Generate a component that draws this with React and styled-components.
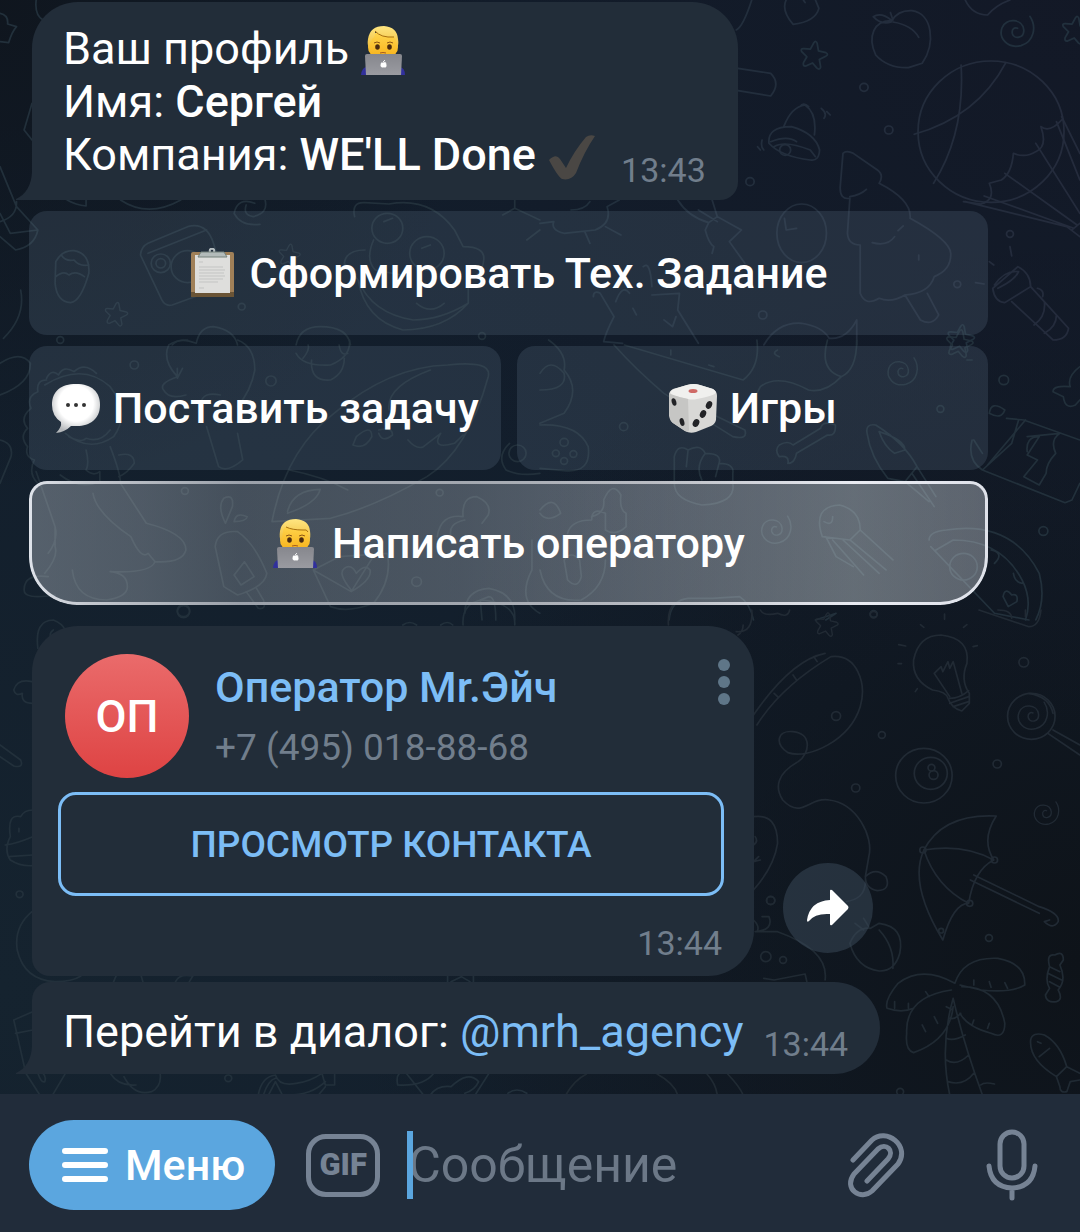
import React from "react";
import styled, { createGlobalStyle } from "styled-components";

const color = {
  bubble: "#222d39",
  composer: "#212c3a",
  accent: "#7cbdf6",
  menu: "#5ba6df",
  muted: "#717e8c",
  icon: "#768394",
};

const GlobalStyle = createGlobalStyle`
  *, *::before, *::after { box-sizing: border-box; }
  body { margin: 0; background: #111a25; }
  button, input { font: inherit; color: inherit; margin: 0; padding: 0; border: 0; background: none; }
  button { cursor: pointer; }
`;

const Screen = styled.div`
  position: relative;
  display: flex;
  flex-direction: column;
  min-height: 100vh;
  overflow: hidden;
  color: #fff;
  font-family: Roboto, "Noto Sans", sans-serif;
  font-size: 45px;
  line-height: 53px;
  background:
    radial-gradient(circle at 100% 0%, rgba(19, 24, 38, 0.9), transparent 45%),
    radial-gradient(circle at 100% 78%, rgba(14, 19, 25, 1), transparent 50%),
    radial-gradient(circle at 0% 0%, rgba(15, 21, 29, 0.9), transparent 30%),
    radial-gradient(circle at 0% 80%, #15232f, transparent 60%),
    #121d2b;
`;

const WallpaperSvg = styled.svg`
  position: absolute;
  inset: 0;
  width: 100%;
  height: 100%;
  fill: none;
  stroke-linecap: round;
  stroke-linejoin: round;
`;

const Chat = styled.main`
  position: relative;
  flex: 1;
  display: flex;
  flex-direction: column;
  justify-content: flex-end;
  align-items: flex-start;
  padding: 2px 92px 20px 32px;
`;

const Bubble = styled.article`
  position: relative;
  display: flex;
  align-items: flex-end;
  gap: ${(p) => (p.$last ? "20px" : "24px")};
  padding: ${(p) => (p.$last ? "23px 32px 16px 31px" : "20px 32px 19px 31px")};
  background: ${color.bubble};
  border-radius: ${(p) => (p.$last ? "18px 46px 46px 0" : "46px 46px 18px 0")};
`;

const TailSvg = styled.svg`
  position: absolute;
  left: -16px;
  bottom: 0;
  width: 16px;
  height: 28px;
  fill: ${color.bubble};
`;

const Message = styled.p`
  margin: 0;
  strong { font-weight: 500; }
`;

const Time = styled.time`
  color: ${color.muted};
  font-size: 34px;
  line-height: 40px;
`;

const BubbleTime = styled(Time)`
  margin-bottom: ${(p) => (p.$last ? "-6px" : "-9px")};
`;

const Link = styled.a`
  color: ${color.accent};
  text-decoration: none;
`;

const Keyboard = styled.div`
  align-self: stretch;
  display: grid;
  grid-template-columns: 1fr 1fr;
  gap: 11px 16px;
  margin: 11px 0 21px -3px;
`;

const KeyButton = styled.button`
  position: relative;
  grid-column: ${(p) => (p.$wide ? "1 / -1" : "auto")};
  display: flex;
  align-items: center;
  justify-content: center;
  gap: ${(p) => (p.$wide ? "14px" : "12px")};
  height: 124px;
  border-radius: 18px;
  background: rgba(90, 110, 130, 0.25);
  font-size: 43px;
  font-weight: 500;
  white-space: nowrap;
`;

const GlowButton = styled(KeyButton)`
  border-radius: 18px 18px 48px 48px;
  background: linear-gradient(
    90deg,
    rgba(225, 232, 240, 0.32) 0%,
    rgba(225, 232, 240, 0.29) 12%,
    rgba(225, 232, 240, 0.24) 22%,
    rgba(225, 232, 240, 0.27) 45%,
    rgba(225, 232, 240, 0.34) 65%,
    rgba(225, 235, 240, 0.4) 86%,
    rgba(225, 232, 240, 0.36) 100%
  );
  &::before {
    content: "";
    position: absolute;
    inset: 0;
    padding: 3px;
    border-radius: inherit;
    background: linear-gradient(90deg, #dfe3ea 0%, #c4c8cf 6%, #9ba1aa 22%, #a2a7af 45%, #b9bcc3 65%, #e9ebf2 86%, #dfe2ea 100%);
    mask: linear-gradient(#000 0 0) content-box exclude, linear-gradient(#000 0 0);
  }
`;

const CardRow = styled.div`
  align-self: stretch;
  display: flex;
  align-items: flex-end;
  gap: 29px;
  margin-bottom: 6px;
`;

const Card = styled.article`
  flex: 0 1 722px;
  display: flex;
  flex-direction: column;
  gap: 14px;
  padding: 28px 30px 12px 26px;
  background: ${color.bubble};
  border-radius: 46px 46px 46px 18px;
`;

const CardHead = styled.header`
  display: flex;
  align-items: flex-start;
  gap: 26px;
  padding-left: 7px;
`;

const Avatar = styled.div`
  flex: none;
  display: grid;
  place-items: center;
  width: 124px;
  height: 124px;
  border-radius: 50%;
  background: linear-gradient(#ea6b6b, #de4343);
  font-size: 45px;
  font-weight: 500;
`;

const Person = styled.div`
  flex: 1;
  padding-top: 8px;
`;

const Name = styled.h2`
  margin: 0 0 11px;
  color: ${color.accent};
  font-size: 43px;
  font-weight: 500;
  line-height: 50px;
`;

const Phone = styled.p`
  margin: 0;
  color: ${color.muted};
  font-size: 37px;
  line-height: 50px;
`;

const MoreButton = styled.button`
  display: flex;
  flex-direction: column;
  gap: 5px;
  margin: 5px -6px 0 0;
`;

const MoreDot = styled.span`
  width: 12px;
  height: 12px;
  border-radius: 50%;
  background: #5f7688;
`;

const ViewButton = styled.button`
  height: 104px;
  border: 3px solid ${color.accent};
  border-radius: 18px;
  color: ${color.accent};
  font-size: 37px;
  font-weight: 500;
`;

const CardTime = styled(Time)`
  align-self: flex-end;
  margin: 13px 2px 1px 0;
`;

const ShareButton = styled.button`
  flex: none;
  display: grid;
  place-items: center;
  width: 90px;
  height: 90px;
  margin-bottom: 23px;
  border-radius: 50%;
  background: rgba(60, 76, 92, 0.5);
`;

const Composer = styled.form`
  position: relative;
  display: flex;
  align-items: center;
  height: 138px;
  padding: 4px 42px 0 29px;
  background: ${color.composer};
  color: ${color.icon};
`;

const MenuButton = styled.button`
  display: flex;
  align-items: center;
  gap: 17px;
  height: 90px;
  padding: 0 30px 0 33px;
  border-radius: 45px;
  background: ${color.menu};
  color: #fff;
  font-size: 43px;
  font-weight: 500;
`;

const GifButton = styled.button`
  width: 74px;
  height: 63px;
  margin: 0 27px 0 31px;
  border: 5px solid ${color.icon};
  border-radius: 20px;
  font-size: 31px;
  font-weight: 900;
  line-height: 40px;
`;

const Field = styled.label`
  position: relative;
  flex: 1;
  min-width: 0;
`;

const Caret = styled.span`
  position: absolute;
  left: 0;
  top: 0;
  width: 6px;
  height: 68px;
  background: ${color.menu};
`;

const Input = styled.input`
  display: block;
  width: 100%;
  height: 68px;
  padding-left: 1px;
  font-size: 50px;
  outline: none;
  &::placeholder { color: #6c7887; opacity: 1; }
`;

const Tools = styled.div`
  display: flex;
  align-items: center;
  gap: 80px;
  button { display: flex; }
`;

const Emoji = styled.svg`
  flex: none;
  width: ${(p) => p.$w || 50}px;
  height: 50px;
  vertical-align: -11px;
`;

function Technologist({ tilt }) {
  return (
    <Emoji $w={46} viewBox="0 0 46 50" aria-hidden="true">
      <defs>
        <linearGradient id="face" x1="0" y1="0" x2="0" y2="1">
          <stop offset="0" stopColor="#ffd64f" />
          <stop offset="1" stopColor="#f7b31c" />
        </linearGradient>
        <linearGradient id="hair" x1="0" y1="0" x2="0" y2="1">
          <stop offset="0" stopColor="#ffe681" />
          <stop offset="1" stopColor="#f0be3c" />
        </linearGradient>
        <linearGradient id="lid" x1="0" y1="0" x2="0" y2="1">
          <stop offset="0" stopColor="#86878d" />
          <stop offset="1" stopColor="#9a9ba1" />
        </linearGradient>
      </defs>
      <path d="M1 50Q2 42 7 42H40Q45 43 45 50Z" fill="#31309c" />
      <path d="M9 15Q9 7 23 7Q37 7 37 15L38 22Q38 26 36 28L34 32H12L10 28Q8 26 8 22Z" fill="url(#face)" />
      <path
        d={tilt
          ? "M9 23Q7 20 8 14Q10 1 24 1Q37 2 38 14Q39 20 37 23Q37 15 34 12Q21 13 15 6Q16 11 12 14Q10 17 9 23Z"
          : "M9 23Q7 20 8 13Q10 1 24 1Q37 2 38 13Q39 20 37 23L36 14Q35 11 31 12Q20 12 14 9Q11 10 11 14Z"}
        fill="url(#hair)"
      />
      <path d={tilt ? "M15 6Q21 13 34 12" : "M14 9Q20 12 31 12Q35 11 36 14"} stroke="#a8700f" fill="none" />
      <path d="M14 18Q17 16 20 18M27 18Q30 16 33 18" stroke="#8b5514" fill="none" />
      <ellipse cx="17.500" cy="22" rx="2.300" ry="2.700" fill="#4a2b10" />
      <ellipse cx="29.500" cy="22" rx="2.300" ry="2.700" fill="#4a2b10" />
      <path d="M20 28Q23 27 26 28" stroke="#a4591c" fill="none" />
      <path d="M5 31Q5 29 7 29H40Q42 29 42 31L41 50H6Z" fill="url(#lid)" />
      <path d="M23 38Q26 36 26 39Q27 43 24 42Q20 43 21 39Q21 37 23 38ZM23 37L25 35Z" fill="#fff" stroke="#fff" strokeWidth=".6" />
    </Emoji>
  );
}

function Clipboard() {
  return (
    <Emoji $w={46} viewBox="0 0 46 50" aria-hidden="true">
      <rect x="2" y="4" width="43" height="45" rx="2" fill="#a08058" />
      <path d="M2 44H45V49H2Z" fill="#6a5436" />
      <path d="M6 7H41V45H6Z" fill="#dededc" />
      <path d="M10 19H34M10 22H36M10 25H35M10 28H36M10 31H34M10 34H29M10 14H14M10 40H15" stroke="#c3c4c3" fill="none" />
      <circle cx="23" cy="3" r="2.300" fill="none" stroke="#b5bdc0" strokeWidth="2" />
      <path d="M12 4H35L38 9H9Z" fill="#b3bbba" stroke="#74817c" />
    </Emoji>
  );
}

function Speech() {
  return (
    <Emoji viewBox="0 0 50 50" aria-hidden="true">
      <defs>
        <radialGradient id="speech" cx="50%" cy="40%" r="60%">
          <stop offset=".6" stopColor="#fff" />
          <stop offset="1" stopColor="#b4b7ba" />
        </radialGradient>
      </defs>
      <path d="M25 1C41 1 49 9 49 22C49 36 39 43 26 43H20Q14 49 5 50Q11 44 10 39Q1 33 1 22C1 8 10 1 25 1Z" fill="url(#speech)" />
      <circle cx="17" cy="22" r="2" fill="#333" />
      <circle cx="25" cy="22" r="2" fill="#333" />
      <circle cx="33" cy="22" r="2" fill="#333" />
    </Emoji>
  );
}

function Dice() {
  return (
    <Emoji viewBox="0 0 50 50" aria-hidden="true">
      <path d="M1 12Q1 8 5 6L19 2Q26 0 32 2L45 6Q49 8 49 13L48 37Q47 41 43 43L28 49Q22 51 17 48L5 40Q2 38 2 33Z" fill="#d8d8d6" />
      <path d="M2 10Q3 7 6 6L19 2Q26 0 32 2L45 6Q48 8 48 10Q45 13 29 16Q24 17 20 16Q4 13 2 10Z" fill="#f0f0ee" />
      <path d="M20 16Q3 12 1 10V33Q2 38 5 40L17 48Q21 50 21 47Z" fill="#c6c6c4" />
      <ellipse cx="25" cy="8" rx="4.500" ry="2" fill="#cf6a66" />
      <g fill="#222326">
        <ellipse cx="6" cy="19" rx="2.300" ry="3.800" transform="rotate(-15 6 19)" />
        <ellipse cx="14" cy="39" rx="2.300" ry="4" transform="rotate(-15 14 39)" />
        <ellipse cx="41" cy="22" rx="3" ry="4" transform="rotate(25 41 22)" />
        <ellipse cx="35" cy="31" rx="3" ry="4" transform="rotate(25 35 31)" />
        <ellipse cx="28" cy="40" rx="3.200" ry="4" transform="rotate(25 28 40)" />
      </g>
    </Emoji>
  );
}

function Check() {
  return (
    <Emoji viewBox="0 0 50 50" aria-hidden="true">
      <path d="M2 29Q9 22 13 28L19 37Q27 20 39 6Q43 3 48 5Q37 21 29 42Q24 50 15 48Q11 46 2 29Z" fill="#4a4744" />
    </Emoji>
  );
}

const Tail = () => (
  <TailSvg viewBox="0 0 16 28" aria-hidden="true">
    <path d="M0 28V27Q15 20 16 0V28Z" />
  </TailSvg>
);

const Star = ({ x, y, r = 1 }) => (
  <path transform={`translate(${x} ${y}) scale(${r}) rotate(8)`} d="M-5 -36Q0 -46 5 -36L12 -14L34 -12Q44 -8 35 -1L18 11L25 33Q24 44 14 37L0 24L-18 36Q-28 38 -26 26L-19 8L-36 -5Q-42 -14 -31 -15L-12 -16Z" />
);

const Spiral = ({ x, y, r = 1 }) => (
  <path transform={`translate(${x} ${y}) scale(${r})`} d="M38 -46C58 -15 50 30 12 42C-28 52 -54 18 -43 -12C-32 -42 16 -40 20 -6C22 20 -8 24 -13 6C-16 -8 -6 -14 2 -10" />
);

const Dots = ({ at }) => at.map(([x, y, r = 10]) => <circle key={`${x}-${y}`} cx={x} cy={y} r={r} />);

function Wallpaper() {
  return (
    <WallpaperSvg viewBox="0 0 1080 1232" preserveAspectRatio="xMidYMid slice" aria-hidden="true">
      <defs>
        <linearGradient id="ink" gradientUnits="userSpaceOnUse" x1="0" y1="0" x2="1568" y2="0">
          <stop offset="0" stopColor="#21303d" />
          <stop offset="1" stopColor="#242b3c" />
        </linearGradient>
      </defs>
      <g stroke="#22303b" strokeWidth="5">
        <g transform="scale(.3443 .3333)">
          <path d="M0 40Q25 45 22 72L48 80Q35 95 25 128L0 125M105 0Q100 45 125 60M93 310L70 390L93 420M0 500L48 620L110 690M0 640L30 700L110 690Q100 740 45 750L0 710M0 665Q50 650 48 605M195 600Q220 615 250 618V600M350 600Q430 655 525 600M60 870Q75 950 10 1015" />
          <path d="M162 785Q180 750 215 752Q262 760 258 820Q235 905 205 908Q165 905 160 850ZM162 830Q185 810 200 825Q220 810 245 830M178 765Q190 785 215 780Q230 800 258 795" />
          <path d="M408 765Q410 740 430 730L545 680Q600 665 620 730L650 830Q650 860 620 870L500 915Q480 920 470 900ZM430 760L600 690" />
          <circle cx="467" cy="790" r="28" /><circle cx="467" cy="790" r="14" /><circle cx="545" cy="800" r="48" />
          <path d="M1030 650Q1020 605 1060 608L1130 612Q1250 590 1320 690L1345 740Q1410 740 1405 780Q1400 830 1360 830V910Q1280 960 1200 960Q1080 940 1040 840L1000 790Q1005 750 1060 750M1040 840Q1060 960 1170 990Q1290 990 1360 910M1210 910Q1250 945 1290 910" />
          <circle cx="1125" cy="685" r="45" /><circle cx="1240" cy="760" r="50" /><path d="M1085 720Q1060 780 1090 810L1190 830M1115 665L1140 655M1225 745L1250 735M1495 600V625L1460 645M1495 625L1568 660M1530 720L1568 690" />
          <path d="M740 610Q690 590 680 640Q700 680 755 673M770 600Q780 640 735 650Q705 645 715 615M500 1035Q520 1010 570 1030Q580 980 620 980Q680 990 690 1035M860 1035Q870 980 930 980Q1010 980 1018 1035" />
          <Star x={337} y={942} r={0.85} /><Star x={840} y={765} r={0.8} /><Dots at={[[175, 1020], [702, 920], [1400, 1008]]} />
        </g>
        <g transform="translate(540 0) scale(.3443 .3333)" stroke="url(#ink)">
          <path d="M735 73Q700 30 715 0M735 73Q800 65 810 25L800 0M765 0L770 8M570 90Q590 80 615 0M575 205L670 220Q700 250 670 288L575 272M1235 0Q1255 45 1300 45Q1325 15 1365 0" />
          <path d="M708 380Q730 320 770 315Q805 340 797 405M665 430Q660 380 730 380Q800 400 812 450Q810 485 785 480Q700 470 665 430ZM670 425Q720 405 745 425M680 440Q710 420 785 450L800 470M755 320Q765 305 780 320M817 325Q835 340 825 355M833 335L843 345M632 440L640 450M645 420Q640 440 650 450" />
          <circle cx="712" cy="450" r="16" />
          <path d="M1022 62C970 60 950 110 975 165Q1010 205 1070 203L1110 190C1150 130 1140 40 1080 32Q1040 30 1022 62ZM1025 66Q1080 75 1100 112M1020 60Q990 35 968 50Q990 75 1020 66M1018 38L1025 60" />
          <circle cx="1310" cy="395" r="212" />
          <path d="M1223 195Q1235 400 1143 550M1353 188Q1270 350 1087 403M1455 380Q1480 400 1515 360M1455 380Q1475 440 1440 455Q1410 475 1375 460Q1370 520 1340 540L1305 550Q1325 600 1280 612L1230 605M1440 430L1568 640M1350 520L1560 675M1290 588L1550 685M1235 605L1530 680L1568 710M1500 365L1568 540M1515 350L1568 460M1545 690L1568 670" />
          <path d="M880 460Q890 450 910 460L980 510Q1000 525 985 550Q1080 600 1075 655Q1190 720 1193 760Q1195 810 1145 830Q1130 880 1060 885Q1020 910 985 895Q945 920 930 880V735Q895 735 893 700L900 595Q870 600 872 560ZM900 590Q930 585 948 568M965 728Q1010 740 1030 710M1040 692L1055 678M1060 885L1105 960Q1140 980 1158 945L1125 880M1100 765V780" />
          <path d="M1315 865L1388 800Q1425 820 1425 860L1350 908Q1320 905 1315 865ZM1320 855Q1350 810 1390 815Q1380 840 1330 865M1370 905L1490 1020Q1530 1020 1535 985L1425 860M1435 975Q1470 950 1465 905M1465 1000Q1500 980 1500 945M1445 865Q1465 870 1460 890M1365 740L1370 768M1305 785L1318 795M1265 848L1290 852" />
          <ellipse cx="760" cy="700" rx="72" ry="88" /><path d="M710 655L715 690L745 685M400 600Q430 650 490 668L480 690Q490 730 505 740L500 760M490 668L515 650L500 600M515 650L585 690L550 725L595 790M460 630L515 665M0 670L40 665Q30 690 70 700L160 690Q210 670 195 620L230 600M90 630Q130 630 145 605M130 695L145 730M190 680L235 705" />
          <path d="M155 890Q155 870 175 880L215 950Q190 1000 185 1025L240 1030M220 905Q240 850 260 880M300 800Q320 780 325 860M325 885L405 880L400 930L460 1030M270 925L280 945M360 960L385 980L395 950M650 1035Q690 965 760 970Q820 980 840 1015Q890 1020 920 960V1035" />
          <Star x={795} y={165} /><Star x={1555} y={90} /><Star x={1222} y={1015} /><Spiral x={1385} y={95} />
          <Dots at={[[941, 262, 12], [1013, 390, 12], [610, 545, 12], [1365, 702], [1212, 853], [647, 945, 12]]} />
        </g>
        <g transform="translate(0 340) scale(.3443 .3333)">
          <path d="M0 70Q60 30 88 70Q90 130 0 165M0 300Q40 310 32 350L0 430M135 115Q150 85 170 105Q185 75 215 95Q245 65 280 100M135 120Q105 120 110 155Q75 170 90 205Q55 235 80 265Q55 290 80 320Q70 350 100 360Q80 400 110 430M130 135Q240 65 320 140Q380 220 330 290Q260 340 190 280M200 290Q240 310 250 295Q290 310 320 270M250 330Q260 370 250 390Q270 410 290 395V425Q230 450 175 405M320 320Q350 400 350 430L425 550Q540 580 540 630Q530 670 450 665L430 640Q410 660 380 590Q280 520 270 460M345 345Q390 335 390 370Q370 400 345 410M105 395L160 560Q170 600 140 640M160 560V620Q170 650 130 700M70 750Q70 700 140 710M70 750Q70 780 160 765M210 690Q220 780 310 780Q370 770 370 740Q370 700 320 695Q440 700 450 665" />
          <path d="M515 110Q470 60 490 15Q510 0 545 0M515 110Q460 130 475 150Q490 180 540 165M515 85V115L530 85M690 0Q740 20 740 90Q730 150 690 200M585 185Q590 155 640 165M600 260L635 380Q660 400 705 360L690 280M860 40Q880 80 960 75Q1020 50 1015 0M905 60Q900 125 960 120Q1000 100 1000 55M895 15Q900 30 880 55M985 15Q990 50 1010 40" />
          <path d="M790 545Q830 330 970 220Q1130 80 1300 75Q1430 60 1418 110Q1360 330 1240 410Q1090 500 960 535ZM1250 90Q1120 140 1130 210M840 390Q940 410 1010 450M1035 290Q1080 250 1080 290Q1060 330 1025 315ZM1100 270Q1140 260 1140 285Q1110 310 1100 280M1185 300Q1210 330 1230 320L1280 280Q1250 330 1320 310L1345 285M835 515Q850 450 930 448Q920 490 835 520" />
          <path d="M655 550Q630 500 650 475Q680 460 675 500ZM680 545Q685 515 718 530Q715 545 680 545M625 620Q630 570 690 575Q740 610 775 700Q770 740 690 765L650 740ZM715 755L750 805Q775 810 765 780L745 745M680 705L710 665L738 710L700 735ZM910 690L985 650L1125 640Q1140 720 1085 790Q1010 820 960 800ZM910 690L1020 755L1090 640M1020 750Q980 700 1000 685Q1020 670 1035 700Q1060 670 1075 690Q1080 720 1020 755" />
          <path d="M1270 590Q1280 520 1345 530Q1340 470 1385 470Q1430 490 1418 525L1400 550M1350 540Q1300 550 1310 590M1350 820Q1350 750 1420 745Q1500 760 1495 840M1400 840L1395 780L1420 770Q1440 770 1440 840M1545 600V690Q1500 780 1568 820M1480 310Q1440 350 1470 390Q1510 410 1568 400" />
          <circle cx="1503" cy="340" r="25" /><Dots at={[[390, 75, 12], [787, 123, 15], [537, 453], [1277, 458], [1210, 725, 14], [533, 812, 18]]} />
        </g>
        <g transform="translate(540 340) scale(.3443 .3333)">
          <path d="M215 15Q280 90 360 160L560 290Q605 300 595 270L495 220M245 15L590 120Q640 80 630 0M835 0Q810 90 875 110Q920 90 920 0M875 110Q830 160 780 150Q690 100 640 140L620 180M380 30V45M490 75L505 80M690 30Q670 40 695 50M0 100Q30 50 70 100Q80 150 0 150M25 0Q80 40 70 90Q120 150 70 220L0 250M0 255Q110 250 140 320Q150 400 70 392L0 385" />
          <path d="M695 315Q680 330 695 350Q725 345 720 370Q740 370 745 340L835 285Q860 290 858 255Q820 240 815 265L735 315Q720 300 695 315M390 350Q400 310 430 330Q465 310 480 340Q530 340 520 370Q565 370 560 400V430Q570 490 470 495Q390 480 390 430ZM430 330L425 380M480 340Q450 380 470 420M520 370L510 410" />
          <path d="M950 280Q945 250 975 255Q1060 310 1095 380L1060 425L1010 415Q960 350 950 280ZM985 275Q1060 300 1060 330L1030 340Q1000 320 985 275M1060 425L1130 485M1095 380L1150 470M1080 400L1145 500" />
          <path d="M1305 220Q1310 180 1350 210Q1340 240 1305 220M1355 235L1405 240L1568 300M1255 300Q1240 360 1285 390L1525 488L1545 480L1568 430M1285 390L1370 310L1390 240M1300 375L1410 240M1285 340L1260 300M1415 335Q1410 290 1450 290L1415 345L1445 360L1405 410L1450 435M1415 290L1510 280Q1480 300 1498 340Q1470 370 1470 400L1450 435M1568 80Q1530 110 1540 140Q1490 135 1490 155L1520 170Q1525 210 1555 195L1568 180" />
          <path d="M820 590Q790 500 870 495Q930 510 930 570L900 600L820 590M930 570L1025 660M880 600L985 700M850 600L940 705M900 600L1005 690M830 590L860 650L910 680M850 530Q850 560 825 545M1130 600Q1130 575 1180 570Q1370 540 1450 700Q1470 780 1440 840M1135 620L1320 820M1320 820L1420 840M1150 630L1200 600Q1340 600 1400 720Q1430 780 1410 840M1310 630Q1350 640 1320 670M1375 700Q1380 730 1405 730M1345 770Q1350 740 1370 765Q1390 760 1385 785L1360 800Z" />
          <circle cx="1230" cy="680" r="40" />
          <path d="M185 480Q210 420 235 465Q230 510 250 520V560Q220 590 190 570V520Q150 500 150 540Q90 540 80 580M185 480Q190 520 150 530M0 510Q40 460 60 520Q20 550 0 520M0 690Q20 790 120 780Q190 740 190 660M70 660Q90 630 115 660L120 710Q110 750 80 720ZM375 840Q380 780 430 775H500L580 770Q610 790 620 840M1240 60H1255M800 840L860 820L830 840" />
          <Spiral x={1052} y={95} r={0.9} /><Spiral x={685} y={570} r={0.9} /><Star x={1218} y={10} />
          <Dots at={[[1347, 120, 14], [1163, 207], [243, 260, 12], [1462, 573, 13], [969, 822], [70, 307, 12], [46, 340], [97, 342], [70, 363]]} />
        </g>
        <g transform="translate(0 610) scale(.3443 .3333)">
          <path d="M110 115Q100 30 155 30Q180 40 190 60M155 60Q140 70 150 90M93 215Q50 205 40 240Q45 260 65 250Q60 280 95 280M0 405L60 450Q70 475 40 468L0 440M30 680Q20 610 60 620Q70 600 95 600M30 680Q10 720 30 750Q60 770 95 767M15 705Q50 700 95 680M25 740L95 735M55 655V665M1345 45Q1340 -20 1400 -30Q1500 -20 1495 45M1170 45Q1190 30 1210 45M1280 45Q1300 30 1315 45" />
          <Dots at={[[57, 853], [533, 5, 18]]} />
        </g>
        <g transform="translate(540 610) scale(.3443 .3333)" stroke="#212a34">
          <path d="M373 45Q370 0 390 -20M615 0Q620 70 570 65M575 75Q590 65 590 45M640 0Q650 20 690 10Q720 25 725 0M1275 0L1420 50Q1450 50 1455 0M1330 0Q1370 0 1370 25M1410 20V0" />
          <path d="M620 315Q730 150 828 130M630 345Q700 230 845 140C920 130 950 220 930 290C900 390 780 450 720 428C680 400 690 360 735 365C790 370 785 430 750 455C690 490 680 530 705 570C760 630 780 560 840 570C920 580 970 680 955 740L945 800C950 860 915 870 890 875M945 800Q975 770 1005 800Q1020 840 980 842Q945 835 945 800M680 250L690 260M735 195L745 210M795 140L805 155M620 620Q690 610 690 700Q680 770 620 840M625 680Q635 695 620 705M635 740L620 755L640 750" />
          <path d="M1185 265Q1180 245 1140 240Q1080 210 1085 150Q1100 75 1165 75Q1250 85 1240 160Q1220 210 1247 250V280L1225 303Q1195 295 1185 265ZM1190 265Q1220 265 1245 242M1190 280L1245 260M1200 290L1245 275M1190 260L1145 190L1165 170L1170 185L1185 155L1190 175L1200 155L1225 250M1175 12V28M1105 44L1115 52M1240 44L1230 52M1042 104L1062 108M1258 110L1270 107M1040 161H1050M1090 245L1096 236" />
          <circle cx="1115" cy="497" r="82" /><circle cx="1135" cy="490" r="48" /><circle cx="1137" cy="473" r="10" /><circle cx="1143" cy="495" r="13" />
          <circle cx="1427" cy="319" r="69" /><path d="M1475 370L1568 435M1490 360L1568 405M1420 250Q1480 260 1490 310" /><Spiral x={1430} y={318} r={0.9} /><Spiral x={1470} y={610} r={0.75} />
          <path d="M1115 720Q1170 610 1325 618Q1280 690 1318 750Q1260 780 1245 880Q1200 880 1170 990M1115 720Q1230 700 1318 750M1115 720Q1150 830 1245 880M1115 720Q1070 820 1170 990M1260 795L1450 890Q1510 910 1505 935Q1490 960 1465 935L1480 930M1250 810L1450 910" />
          <circle cx="1112" cy="720" r="9" /><circle cx="1320" cy="750" r="9" /><circle cx="1248" cy="880" r="9" />
          <Star x={832} y={43} r={0.85} /><Dots at={[[969, 14], [1405, 157, 14], [860, 318, 13], [993, 375], [1328, 462, 12], [917, 534, 12], [670, 871, 12]]} />
        </g>
        <g transform="translate(0 900) scale(.3443 .3333)">
          <path d="M93 35Q40 80 50 150Q70 240 160 245Q210 245 235 228M330 245Q340 220 350 200M415 245L405 210M510 245Q520 220 560 228L550 245M95 335L40 360L75 520M45 400L95 390M75 520L125 600M190 520L150 590M110 520Q120 550 130 545Q135 530 125 520M320 520Q345 560 395 555M360 530Q390 590 440 575Q470 560 465 520M750 585Q760 530 800 525M765 585Q780 540 800 535M780 585L800 545L820 585M800 525Q810 560 860 550Q900 545 935 520M820 585Q900 590 945 545M935 520L945 555H972V520M925 585L945 560M1155 555Q1150 530 1160 520M1155 555Q1230 560 1260 520M1180 520L1230 585M1250 585Q1270 555 1310 560Q1360 510 1390 545Q1380 570 1350 580M1380 585L1420 520M1475 580Q1500 560 1530 580M1300 245V228M1310 245L1340 230L1365 245M1375 228V245" />
          <Dots at={[[663, 535]]} />
        </g>
        <g transform="translate(540 900) scale(.3443 .3333)" stroke="#202a33">
          <path d="M620 60Q640 80 630 95L690 95Q840 150 828 240M625 95Q680 90 665 50L645 50M650 235L680 240L770 222L775 245M75 585Q100 540 135 522M340 522Q390 550 400 585M485 522Q510 550 515 585M545 522Q580 560 590 585" />
          <path d="M900 130Q920 80 960 85L985 70Q1060 80 1045 160Q1030 215 985 213Q920 205 900 130ZM985 90Q1030 140 1025 205M915 70L940 90M940 55L955 80" />
          <path d="M1205 250Q1110 195 1040 250Q1000 300 1008 325Q1050 340 1085 325M1205 250Q1230 170 1330 175Q1410 190 1408 255Q1370 280 1280 270L1220 255M1195 270Q1060 290 1065 400Q1060 450 1085 458Q1190 420 1200 320M1225 260Q1330 260 1350 370Q1350 420 1310 400Q1240 380 1220 340M1200 295Q1160 440 1190 585M1200 295Q1230 430 1285 585M1190 355Q1205 360 1222 340M1180 415Q1200 425 1235 405M1180 480Q1210 500 1245 465M1185 545Q1230 560 1260 520M1030 305V325M1070 310V325M1120 275L1130 290M1260 240V255M1305 245L1310 262M1350 248L1358 265M1145 350L1155 370M1110 375L1120 395M1180 320L1195 328M1260 360L1255 375M1305 370L1300 385M1280 555Q1290 545 1320 552" />
          <path d="M1480 200Q1470 160 1495 165Q1520 150 1520 180L1510 195Q1530 240 1505 270Q1520 300 1500 305Q1470 310 1468 285L1480 265Q1465 240 1480 200ZM1480 200L1510 215M1475 220L1515 240M1480 245L1510 262M1425 420Q1430 395 1465 405Q1510 430 1530 500L1568 520M1425 420Q1420 480 1500 530L1510 560Q1510 580 1530 575L1540 545L1568 540M1450 470L1480 445M1500 530L1530 500M1445 425L1455 430" />
          <Dots at={[[670, 2, 12], [656, 170, 15], [706, 180], [1304, 114], [1046, 575], [1165, 92, 7]]} />
        </g>
      </g>
    </WallpaperSvg>
  );
}

export default function App() {
  return (
    <>
      <GlobalStyle />
      <Screen>
        <Wallpaper />
        <Chat>
          <Bubble>
            <Tail />
            <Message>
              Ваш профиль <Technologist tilt />
              <br />
              Имя: <strong>Сергей</strong>
              <br />
              Компания: <strong>WE'LL Done</strong> <Check />
            </Message>
            <BubbleTime>13:43</BubbleTime>
          </Bubble>

          <Keyboard>
            <KeyButton type="button" $wide>
              <Clipboard />
              Сформировать Тех. Задание
            </KeyButton>
            <KeyButton type="button">
              <Speech />
              Поставить задачу
            </KeyButton>
            <KeyButton type="button">
              <Dice />
              Игры
            </KeyButton>
            <GlowButton type="button" $wide>
              <Technologist />
              Написать оператору
            </GlowButton>
          </Keyboard>

          <CardRow>
            <Card>
              <CardHead>
                <Avatar>ОП</Avatar>
                <Person>
                  <Name>Оператор Mr.Эйч</Name>
                  <Phone>+7 (495) 018-88-68</Phone>
                </Person>
                <MoreButton type="button" aria-label="Ещё">
                  <MoreDot />
                  <MoreDot />
                  <MoreDot />
                </MoreButton>
              </CardHead>
              <ViewButton type="button">ПРОСМОТР КОНТАКТА</ViewButton>
              <CardTime>13:44</CardTime>
            </Card>
            <ShareButton type="button" aria-label="Переслать">
              <svg width="42" height="38" viewBox="0 0 42 38" aria-hidden="true">
                <path d="M23 2Q23 0 25 1L41 17Q42 18 41 20L25 36Q23 37 23 35V25Q8 24 2 32Q0 34 0 31Q3 12 23 11Z" fill="#fff" />
              </svg>
            </ShareButton>
          </CardRow>

          <Bubble $last>
            <Tail />
            <Message>
              Перейти в диалог: <Link href="#mrh_agency">@mrh_agency</Link>
            </Message>
            <BubbleTime $last>13:44</BubbleTime>
          </Bubble>
        </Chat>

        <Composer onSubmit={(e) => e.preventDefault()}>
          <MenuButton type="button">
            <svg width="46" height="36" viewBox="0 0 46 36" aria-hidden="true">
              <path d="M3 4H43M3 18H43M3 32H43" stroke="#fff" strokeWidth="6" strokeLinecap="round" />
            </svg>
            Меню
          </MenuButton>
          <GifButton type="button">GIF</GifButton>
          <Field>
            <Input type="text" placeholder="Сообщение" aria-label="Сообщение" />
            <Caret />
          </Field>
          <Tools>
            <button type="button" aria-label="Прикрепить файл">
              <svg width="58" height="66" viewBox="0 0 58 66" fill="none" stroke="currentColor" strokeWidth="5" strokeLinecap="round" strokeLinejoin="round" aria-hidden="true">
                <path d="M5 28L24 8C38 -5 63 14 50 32L24 59C13 69 -5 57 6 42L30 17C38 10 47 19 40 27L19 49" />
              </svg>
            </button>
            <button type="button" aria-label="Голосовое сообщение">
              <svg width="52" height="72" viewBox="0 0 52 72" fill="none" stroke="currentColor" strokeWidth="5" strokeLinecap="round" aria-hidden="true">
                <rect x="14" y="3" width="24" height="46" rx="12" />
                <path d="M3 37Q5 58 26 59Q47 58 49 37M26 60V69" />
              </svg>
            </button>
          </Tools>
        </Composer>
      </Screen>
    </>
  );
}
